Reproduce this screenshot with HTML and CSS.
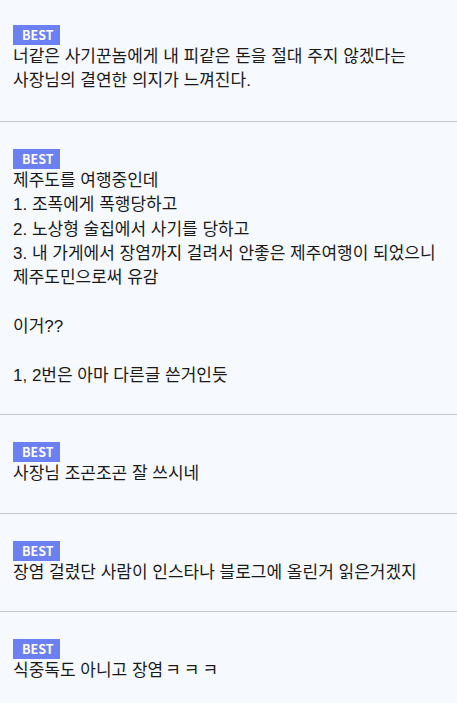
FILE: index.html
```html
<!DOCTYPE html>
<html>
	<head>
		<link rel="stylesheet" href="styles.css">
	</head>
	<body>
	<ul class="comments">
		<li class="comment first">
			<span class="best">BEST</span>
			<p>너같은 사기꾼놈에게 내 피같은 돈을 절대 주지 않겠다는<br />사장님의 결연한 의지가 느껴진다.</p>
		</li>
		<li class="comment">
			<span class="best">BEST</span>
			<p>제주도를 여행중인데<br />1. 조폭에게 폭행당하고<br />2. 노상형 술집에서 사기를 당하고<br />3. 내 가게에서 장염까지 걸려서 안좋은 제주여행이 되었으니<br />제주도민으로써 유감<br /><br />이거??<br /><br />1, 2번은 아마 다른글 쓴거인듯</p>
		</li>
		<li class="comment">
			<span class="best">BEST</span>
			<p>사장님 조곤조곤 잘 쓰시네</p>
		</li>
		<li class="comment">
			<span class="best">BEST</span>
			<p>장염 걸렸단 사람이 인스타나 블로그에 올린거 읽은거겠지</p>
		</li>
		<li class="comment">
			<span class="best">BEST</span>
			<p>식중독도 아니고 장염<span class="jamo">ㅋㅋㅋ</span></p>
		</li>
	</ul>
	</body>
</html>
```

FILE: styles.css
```css
body {
	margin: 0;
	background-color: #f6f9fe;
	color: #1a1a1a;
	font-family: "Liberation Sans", "Noto Sans CJK KR", sans-serif;
}

ul.comments {
	list-style: none;
	margin: 0;
	padding: 0;
}

li.comment {
	padding: 27px 13px 26px 13px;
	border-bottom: 1px solid #c8c8cc;
}
li.comment.first {
	padding-top: 25px;
	padding-bottom: 27px;
}

span.best {
	display: inline-block;
	height: 20px;
	line-height: 19px;
	padding: 0 6px 0 9px;
	background-color: #6b80f2;
	color: white;
	font-family: "Noto Sans CJK KR", sans-serif;
	font-size: 12.5px;
	font-weight: bold;
	vertical-align: top;
}

li.comment p {
	margin: 0;
	font-size: 17px;
	line-height: 24.4px;
}

span.jamo {
	letter-spacing: 3px;
	padding-left: 2px;
}
```
